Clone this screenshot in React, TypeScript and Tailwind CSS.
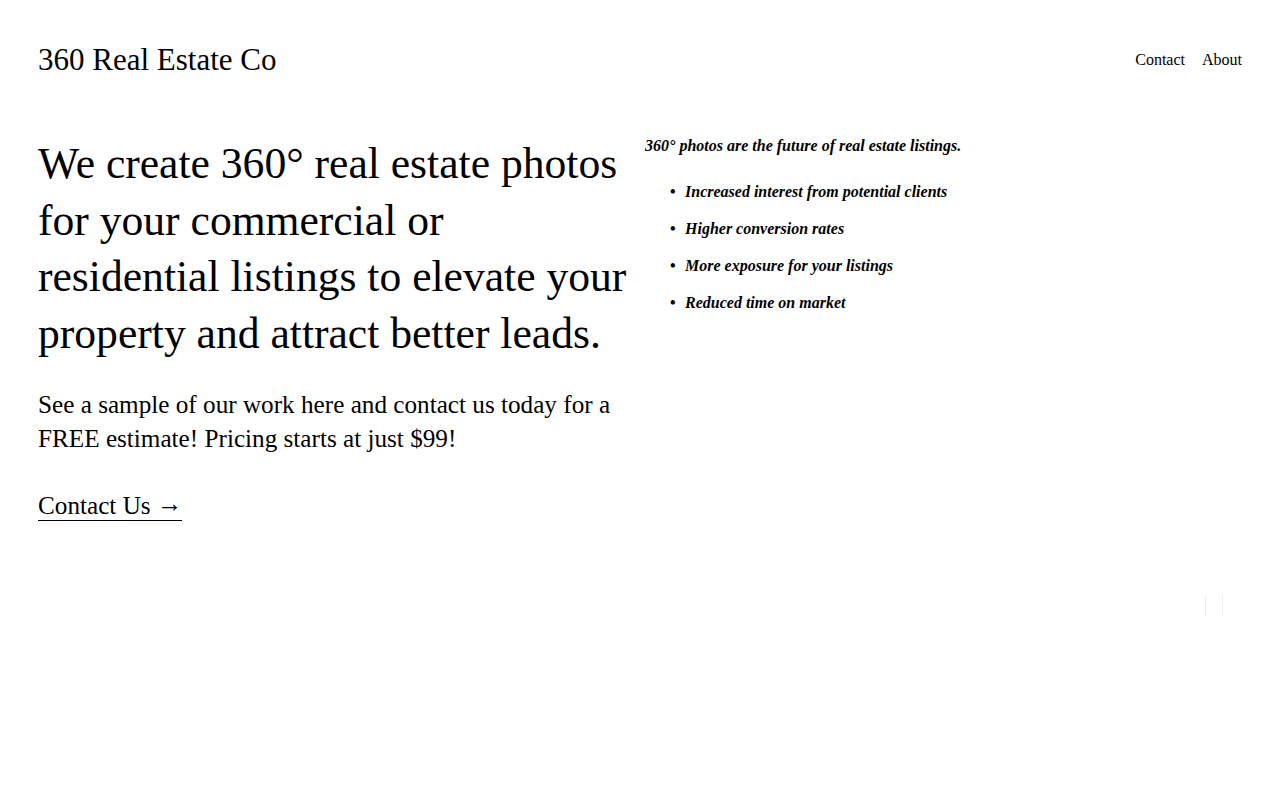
import React from "react";

const benefits = [
  "Increased interest from potential clients",
  "Higher conversion rates",
  "More exposure for your listings",
  "Reduced time on market",
];

export default function App() {
  return (
    <div className="min-h-screen bg-white text-black font-['Liberation_Serif',serif]">
      {/* Header */}
      <header className="flex items-start justify-between px-[38px] pt-[42px]">
        <div className="text-[31px] leading-[36px]">360 Real Estate Co</div>
        <nav className="flex gap-[17px] pt-[8px] text-[16px] leading-[20px]">
          <a href="#">Contact</a>
          <a href="#">About</a>
        </nav>
      </header>

      {/* Hero */}
      <main className="flex px-[38px] pt-[57px]">
        <div className="w-[607px] shrink-0">
          <h1 className="w-[593px] text-[43.6px] leading-[56.7px]">
            We create 360° real estate photos for your commercial or residential listings to elevate your property and attract better leads.
          </h1>
          <p className="mt-[26px] text-[25.2px] leading-[34px]">
            See a sample of our work here and contact us today for a FREE estimate! Pricing starts at just $99!
          </p>
          <a href="#" className="mt-[36px] inline-block text-[25.2px] leading-[28px] border-b border-black">
            Contact Us <span className="relative -top-[2px]">→</span>
          </a>
        </div>
        <div className="pt-[1px] font-bold italic text-[16px]">
          <p className="leading-[20px]">360° photos are the future of real estate listings.</p>
          <ul className="mt-[26px] flex flex-col gap-[17px] pl-[25px]">
            {benefits.map((b) => (
              <li key={b} className="flex leading-[20px]">
                <span className="w-[15px] not-italic">•</span>
                <span>{b}</span>
              </li>
            ))}
          </ul>
        </div>
      </main>

      {/* faint pause control */}
      <div className="flex justify-end pr-[57px] pt-[74px]">
        <div className="flex gap-[16px]">
          <div className="h-[21px] w-px bg-[#ececec]" />
          <div className="h-[21px] w-px bg-[#ececec]" />
        </div>
      </div>
    </div>
  );
}
